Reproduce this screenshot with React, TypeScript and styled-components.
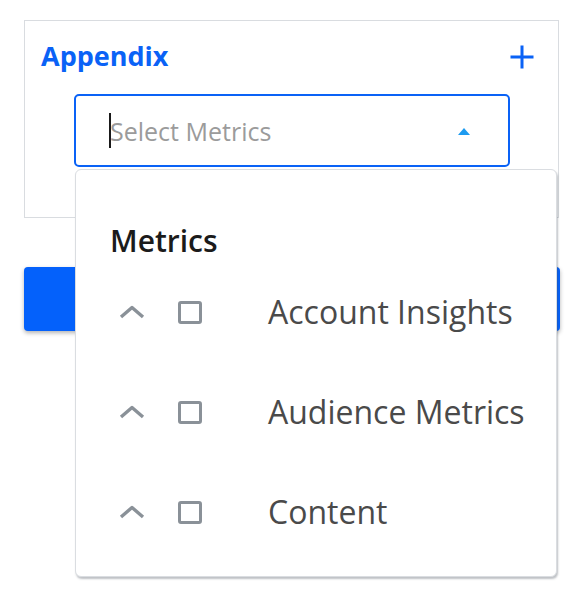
import styled, { createGlobalStyle } from 'styled-components'

const GlobalStyle = createGlobalStyle`
	* {
		box-sizing: border-box;
	}

	body {
		margin: 0;
		background: #ffffff;
		font-family: 'Open Sans', 'Noto Sans', sans-serif;
	}
`

const metrics = ['Account Insights', 'Audience Metrics', 'Content']

const ChevronUp = () => (
	<svg width='26' height='14' viewBox='0 0 26 14'>
		<polyline
			points='2,12 13,2.5 24,12'
			fill='none'
			stroke='#8a9198'
			strokeWidth='3.4'
			strokeLinejoin='round'
		/>
	</svg>
)

const PlusIcon = () => (
	<svg width='24' height='24' viewBox='0 0 24 24'>
		<path d='M12 0.5 V23.5 M0.5 12 H23.5' stroke='#0a62f6' strokeWidth='3' />
	</svg>
)

export default function App() {
	return (
		<Page>
			<GlobalStyle />
			<Card>
				<Header>
					<Title>Appendix</Title>
					<AddButton aria-label='add'>
						<PlusIcon />
					</AddButton>
				</Header>
				<SelectWrap>
					<SelectBox>
						<Cursor />
						<Placeholder>Select Metrics</Placeholder>
						<Caret />
					</SelectBox>
					<Menu>
						<MenuTitle>Metrics</MenuTitle>
						{metrics.map((m) => (
							<Row key={m}>
								<ChevronUp />
								<Check />
								<RowLabel>{m}</RowLabel>
							</Row>
						))}
					</Menu>
				</SelectWrap>
			</Card>
			<PrimaryButton />
		</Page>
	)
}

const Page = styled.div`
	padding: 20px 0 0 24px;
	width: 574px;
	height: 604px;
`

const Card = styled.div`
	position: relative;
	width: 535px;
	height: 198px;
	border: 1px solid #d9dce0;
	padding: 17px 24px 0 16px;
`

const Header = styled.div`
	display: flex;
	align-items: center;
	justify-content: space-between;
	height: 36px;
`

const Title = styled.h2`
	margin: 0;
	font-size: 27px;
	line-height: 36px;
	font-weight: 700;
	color: #0a62f6;
`

const AddButton = styled.button`
	display: flex;
	padding: 0;
	border: none;
	background: none;
	margin-top: 2px;
`

const SelectWrap = styled.div`
	position: relative;
	margin: 20px 0 0 33px;
	width: 436px;
`

const SelectBox = styled.div`
	display: flex;
	align-items: center;
	height: 73px;
	padding: 0 38px 0 33px;
	border: 2px solid #0a62f6;
	border-radius: 5px;
	background: #ffffff;
`

const Cursor = styled.span`
	width: 2px;
	height: 35px;
	background: #1a1a1a;
	margin-right: -1px;
`

const Placeholder = styled.span`
	flex: 1;
	font-size: 25px;
	color: #9b9b9b;
	line-height: 34px;
`

const Caret = styled.span`
	width: 0;
	height: 0;
	border-left: 6px solid transparent;
	border-right: 6px solid transparent;
	border-bottom: 7px solid #1d9bf0;
	margin-top: 2px;
`

const Menu = styled.div`
	position: absolute;
	top: calc(100% + 2px);
	left: 1px;
	z-index: 2;
	width: 482px;
	height: 408px;
	padding: 52px 0 15px 44px;
	background: #ffffff;
	border: 1px solid #dadde1;
	border-radius: 6px;
	box-shadow: 1px 2px 2px rgba(70, 78, 88, 0.35);
`

const MenuTitle = styled.div`
	font-size: 30px;
	line-height: 38px;
	font-weight: 600;
	color: #1b1b1b;
	margin: 0 0 1px -10px;
`

const Row = styled.div`
	display: flex;
	align-items: center;
	height: 100px;
	padding-top: 2px;

	svg {
		margin-left: -1px;
		margin-right: 33px;
	}
`

const Check = styled.span`
	width: 24px;
	height: 23px;
	border: 3px solid #8a9198;
	border-radius: 3px;
	margin-right: 66px;
`

const RowLabel = styled.span`
	font-size: 32px;
	line-height: 44px;
	color: #4a4a4a;
`

const PrimaryButton = styled.button`
	display: block;
	margin-top: 49px;
	width: 536px;
	height: 64px;
	border: none;
	border-radius: 4px;
	background: #0461fb;
	box-shadow: 0 2px 4px rgba(0, 0, 0, 0.3);
`
